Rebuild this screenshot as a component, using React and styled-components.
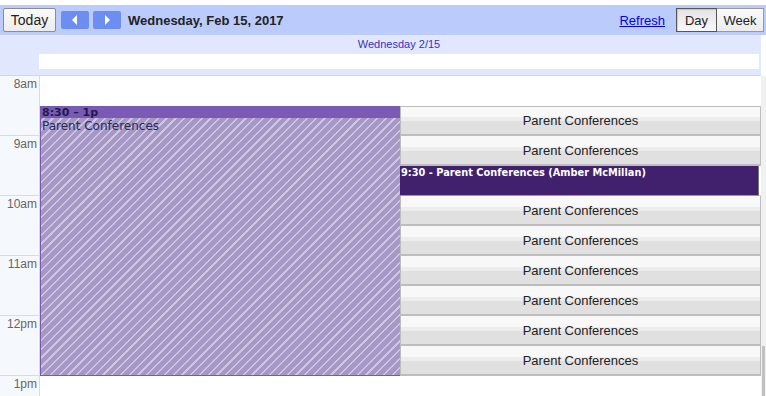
import React from 'react';
import styled, { createGlobalStyle } from 'styled-components';

const GlobalStyle = createGlobalStyle`
  html, body {
    margin: 0;
    padding: 0;
    background: #fff;
  }
  body {
    font-family: "Liberation Sans", Arial, sans-serif;
  }
`;

const HOURS = ['8am', '9am', '10am', '11am', '12pm', '1pm'];

const slots = [
  { type: 'free' },
  { type: 'free' },
  { type: 'booked', label: '9:30 - Parent Conferences (Amber McMillan)' },
  { type: 'free' },
  { type: 'free' },
  { type: 'free' },
  { type: 'free' },
  { type: 'free' },
  { type: 'free' },
];

const App = () => (
  <>
    <GlobalStyle />
    <Page>
      <Toolbar>
        <TodayButton>Today</TodayButton>
        <NavGroup>
          <NavButton aria-label="Previous">
            <svg width="8" height="10" viewBox="0 0 8 10"><path d="M6 0 L1 5 L6 10 Z" fill="#fff" /></svg>
          </NavButton>
          <NavButton aria-label="Next">
            <svg width="8" height="10" viewBox="0 0 8 10"><path d="M2 0 L7 5 L2 10 Z" fill="#fff" /></svg>
          </NavButton>
        </NavGroup>
        <DateTitle>Wednesday, Feb 15, 2017</DateTitle>
        <Spacer />
        <RefreshLink href="#">Refresh</RefreshLink>
        <ViewTabs>
          <ViewTab $active $w={41}>Day</ViewTab>
          <ViewTab $w={47}>Week</ViewTab>
        </ViewTabs>
      </Toolbar>

      <DayHeader>
        <DayLabel>Wednesday 2/15</DayLabel>
        <AllDayBox />
      </DayHeader>

      <Body>
        <Gutter>
          {HOURS.map((h) => (
            <HourLabel key={h}>{h}</HourLabel>
          ))}
        </Gutter>
        <Grid>
          <Column>
            <SlotGap />
            <LongEvent>
              <EventHead>8:30 – 1p</EventHead>
              <EventTitle>Parent Conferences</EventTitle>
            </LongEvent>
          </Column>
          <Column>
            <SlotGap />
            {slots.map((s, i) =>
              s.type === 'free' ? (
                <SlotButton key={i} $first={i === 0}>Parent Conferences</SlotButton>
              ) : (
                <BookedSlot key={i}>{s.label}</BookedSlot>
              )
            )}
          </Column>
        </Grid>
        <ScrollTrack>
          <ScrollThumb />
        </ScrollTrack>
      </Body>
    </Page>
  </>
);

const Page = styled.div`
  width: 766px;
  height: 396px;
  overflow: hidden;
  padding-top: 5px;
  box-sizing: border-box;
  display: flex;
  flex-direction: column;
`;

const Toolbar = styled.div`
  height: 30px;
  flex-shrink: 0;
  background: #bbccfc;
  display: flex;
  align-items: center;
  padding: 0 2px 0 3px;
  box-sizing: border-box;
  width: 766px;
`;

const TodayButton = styled.button`
  height: 24px;
  width: 53px;
  padding: 0;
  margin-right: 5px;
  font-family: "Liberation Sans", Arial, sans-serif;
  font-size: 14px;
  color: #222;
  background: linear-gradient(#fafafa, #ececec);
  border: 1px solid #8c8c8c;
  border-radius: 2px;
`;

const NavGroup = styled.div`
  display: flex;
  gap: 4px;
  margin-right: 7px;
`;

const NavButton = styled.button`
  width: 28px;
  height: 18px;
  padding: 0;
  border: none;
  border-radius: 2px;
  background: #6c8ef0;
  display: flex;
  align-items: center;
  justify-content: center;
`;

const DateTitle = styled.div`
  font-size: 13px;
  font-weight: bold;
  color: #222;
`;

const Spacer = styled.div`
  flex: 1;
`;

const RefreshLink = styled.a`
  font-size: 13px;
  color: #0000ee;
  text-decoration: underline;
  margin-right: 11px;
`;

const ViewTabs = styled.div`
  display: flex;
`;

const ViewTab = styled.button`
  height: 24px;
  width: ${(p) => p.$w}px;
  padding: 0;
  font-family: "Liberation Sans", Arial, sans-serif;
  font-size: 13px;
  color: #222;
  border-radius: 0;
  border: 1px solid ${(p) => (p.$active ? '#555' : '#999')};
  border-left-width: ${(p) => (p.$active ? '1px' : '0')};
  background: ${(p) => (p.$active ? 'linear-gradient(#e4e4e4, #f8f8f8)' : 'linear-gradient(#fafafa, #ececec)')};
  box-shadow: ${(p) => (p.$active ? 'inset 1px 1px 1px rgba(0,0,0,0.15)' : 'none')};
`;

const DayHeader = styled.div`
  width: 761px;
  height: 41px;
  flex-shrink: 0;
  background: #e1e8fd;
  padding-left: 39px;
  box-sizing: border-box;
  border-bottom: 1px solid #cfd6ea;
`;

const DayLabel = styled.div`
  height: 19px;
  line-height: 19px;
  font-size: 11px;
  color: #3a2fc6;
  text-align: center;
  padding-right: 2px;
`;

const AllDayBox = styled.div`
  width: 720px;
  height: 15px;
  background: #fff;
`;

const Body = styled.div`
  flex: 1;
  display: flex;
  min-height: 0;
`;

const Gutter = styled.div`
  width: 40px;
  flex-shrink: 0;
  background: #f5f8fc;
  border-right: 1px solid #dcdcdc;
  box-sizing: border-box;
`;

const HourLabel = styled.div`
  height: 60px;
  box-sizing: border-box;
  border-bottom: 1px solid #dcdcdc;
  text-align: right;
  padding: 1px 2px 0 0;
  font-size: 12px;
  color: #666;
`;

const Grid = styled.div`
  width: 721px;
  flex-shrink: 0;
  display: grid;
  grid-template-columns: 360px 361px;
  align-items: start;
  background-image: repeating-linear-gradient(
    to bottom,
    transparent 0,
    transparent 59px,
    #dcdcdc 59px,
    #dcdcdc 60px
  );
`;

const Column = styled.div`
  display: flex;
  flex-direction: column;
`;

const SlotGap = styled.div`
  height: 30px;
`;

const LongEvent = styled.div`
  height: 270px;
  box-sizing: border-box;
  border-left: 1px solid #7a58b4;
  border-bottom: 1px solid #7a58b4;
  background-color: #a698c6;
  background-image: repeating-linear-gradient(
    -45deg,
    transparent 0,
    transparent 4.6px,
    rgba(255, 255, 255, 0.45) 4.6px,
    rgba(255, 255, 255, 0.45) 6.2px
  );
`;

const EventHead = styled.div`
  height: 12px;
  background: #7b5ab5;
  font-family: "DejaVu Sans", Verdana, sans-serif;
  font-size: 11px;
  font-weight: bold;
  line-height: 13px;
  color: #1d1d4a;
  padding-left: 1px;
  white-space: nowrap;
  overflow: hidden;
`;

const EventTitle = styled.div`
  font-family: "DejaVu Sans", Verdana, sans-serif;
  font-size: 12px;
  line-height: 16px;
  color: #2a2a5a;
  padding-left: 1px;
`;

const SlotButton = styled.div`
  height: 30px;
  box-sizing: border-box;
  padding-top: 1px;
  border: 1px solid #bdbdbd;
  border-bottom-width: 2px;
  border-top-width: ${(p) => (p.$first ? '1px' : '0')};
  background: linear-gradient(
    #f8f8f8 0%,
    #f8f8f8 38%,
    #ededed 38%,
    #ededed 52%,
    #e0e0e0 52%,
    #e0e0e0 100%
  );
  font-size: 13px;
  color: #222;
  text-align: center;
  line-height: ${(p) => (p.$first ? '26px' : '28px')};
`;

const BookedSlot = styled.div`
  height: 30px;
  box-sizing: border-box;
  width: 359px;
  background: #41206e;
  border-right: 1px solid #777;
  border-bottom: 1px solid #999;
  font-family: "DejaVu Sans", Verdana, sans-serif;
  font-size: 9.8px;
  font-weight: bold;
  color: #fff;
  padding: 1px 0 0 1px;
  white-space: nowrap;
`;

const ScrollTrack = styled.div`
  flex: 1;
  background: #f1f1f1;
  display: flex;
  flex-direction: column;
  justify-content: flex-end;
  padding-left: 1px;
`;

const ScrollThumb = styled.div`
  width: 3px;
  height: 50px;
  background: #c1c1c1;
`;

export default App;
